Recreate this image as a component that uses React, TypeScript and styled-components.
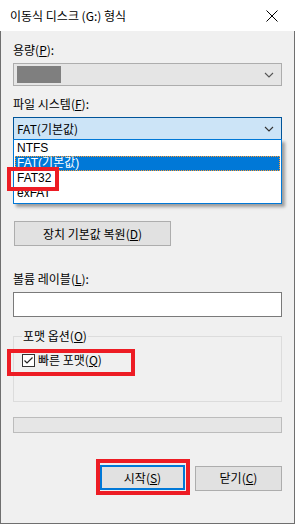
import React from "react";
import styled, { createGlobalStyle } from "styled-components";

const Global = createGlobalStyle`
  html, body { margin: 0; padding: 0; background: #ffffff; }
  body { width: 295px; height: 524px; overflow: hidden; }
  * { box-sizing: border-box; }
`;

const FONT = `"Noto Sans CJK KR", "Noto Sans", sans-serif`;

const Window = styled.div`
  width: 295px;
  height: 524px;
  display: flex;
  flex-direction: column;
  font-family: ${FONT};
  font-size: 12px;
  line-height: 16px;
  color: #000;
`;

const TitleBar = styled.div`
  height: 31px;
  flex: none;
  background: #ffffff;
  display: flex;
  align-items: center;
  justify-content: space-between;
  padding: 0 17px 0 10px;
`;

const Title = styled.span`
  font-size: 12px;
  color: #000;
`;

const CloseIcon = styled.svg`
  width: 12px;
  height: 12px;
  display: block;
`;

const Body = styled.div`
  flex: 1;
  background: #f0f0f0;
  border: 1px solid #6f6f6f;
  border-top: none;
  padding: 11px 12px 0 12px;
  display: flex;
  flex-direction: column;
`;

const Label = styled.div<{ $mt?: number }>`
  margin-top: ${(p) => p.$mt ?? 0}px;
  height: 16px;
  white-space: nowrap;
`;

const U = styled.span`
  text-decoration: underline;
  text-underline-offset: 1px;
`;

const ComboWrap = styled.div<{ $mt?: number }>`
  position: relative;
  margin-top: ${(p) => p.$mt ?? 0}px;
`;

const Combo = styled.div<{ $focused?: boolean }>`
  height: 23px;
  display: flex;
  align-items: center;
  padding: 0 3px 0 3px;
  background: ${(p) => (p.$focused ? "#cce4f7" : "#e5e5e5")};
  border: 1px solid ${(p) => (p.$focused ? "#005499" : "#adadad")};
`;

const ComboValue = styled.div`
  flex: 1;
  white-space: nowrap;
`;

const GrayBlock = styled.div`
  width: 44px;
  height: 17px;
  background: #7f7f7f;
`;

const Chevron = styled.svg`
  width: 10px;
  height: 6px;
  margin-right: 4px;
  display: block;
`;

const List = styled.div`
  position: absolute;
  left: 0;
  right: 0;
  top: 100%;
  margin-top: -1px;
  background: #ffffff;
  border: 1px solid #0078d7;
  box-shadow: 3px 3px 3px rgba(0, 0, 0, 0.35);
  padding: 1px 1px 2px 1px;
  z-index: 2;
`;

const Item = styled.div<{ $selected?: boolean }>`
  height: 15px;
  line-height: 15px;
  padding-left: 2px;
  white-space: nowrap;
  font-family: "Liberation Sans", "Noto Sans CJK KR", sans-serif;
  background: ${(p) => (p.$selected ? "#0078d7" : "transparent")};
  color: ${(p) => (p.$selected ? "#ffffff" : "#000000")};
  outline: ${(p) => (p.$selected ? "1px dotted #ff9a2e" : "none")};
  outline-offset: -1px;
`;

const RedMark = styled.div<{ $l: number; $t: number; $w: number; $h: number }>`
  position: absolute;
  left: ${(p) => p.$l}px;
  top: ${(p) => p.$t}px;
  width: ${(p) => p.$w}px;
  height: ${(p) => p.$h}px;
  border: 4px solid #ed1c24;
  pointer-events: none;
  z-index: 3;
`;

const Button = styled.div<{ $w: number; $default?: boolean }>`
  width: ${(p) => p.$w}px;
  height: 25px;
  display: flex;
  align-items: center;
  justify-content: center;
  background: #e1e1e1;
  border: ${(p) => (p.$default ? "2px solid #0078d7" : "1px solid #adadad")};
  white-space: nowrap;
`;

const ResetRow = styled.div`
  margin-top: 81px;
  padding-left: 1px;
`;

const TextBox = styled.div`
  margin-top: 5px;
  height: 25px;
  background: #ffffff;
  border: 1px solid #7a7a7a;
`;

const Group = styled.fieldset`
  position: relative;
  margin: 11px 0 0 0;
  padding: 8px 0 0 8px;
  height: 74px;
  border: 1px solid #dcdcdc;
  min-width: 0;
`;

const Legend = styled.legend`
  padding: 0 1px;
  margin-left: 0;
  font-size: 12px;
  line-height: 16px;
`;

const CheckRow = styled.div`
  display: flex;
  align-items: center;
  gap: 3px;
  height: 16px;
`;

const CheckBox = styled.div`
  width: 13px;
  height: 13px;
  background: #ffffff;
  border: 1px solid #333333;
  display: flex;
  align-items: center;
  justify-content: center;
`;

const Progress = styled.div`
  margin-top: 15px;
  height: 16px;
  background: #e6e6e6;
  border: 1px solid #bcbcbc;
`;

const ButtonRow = styled.div`
  margin-top: 28px;
  display: flex;
  justify-content: flex-end;
  align-items: center;
  gap: 5px;
`;

const RedFrame = styled.div`
  border: 4px solid #ed1c24;
  padding: 2px 1px 1px 0;
  margin-top: -2px;
`;

export default function App() {
  return (
    <>
      <Global />
      <Window>
        <TitleBar>
          <Title>이동식 디스크 (G:) 형식</Title>
          <CloseIcon viewBox="0 0 12 12">
            <path d="M0.5 0.5 L11.5 11.5 M11.5 0.5 L0.5 11.5" stroke="#000" strokeWidth="1" fill="none" />
          </CloseIcon>
        </TitleBar>
        <Body>
          <Label>
            용량(<U>P</U>):
          </Label>
          <ComboWrap $mt={5}>
            <Combo>
              <ComboValue>
                <GrayBlock />
              </ComboValue>
              <Chevron viewBox="0 0 10 6">
                <path d="M1 1 L5 5 L9 1" stroke="#555" strokeWidth="1.1" fill="none" />
              </Chevron>
            </Combo>
          </ComboWrap>

          <Label $mt={10}>
            파일 시스템(<U>F</U>):
          </Label>
          <ComboWrap $mt={5}>
            <Combo $focused>
              <ComboValue>FAT(기본값)</ComboValue>
              <Chevron viewBox="0 0 10 6">
                <path d="M1 1 L5 5 L9 1" stroke="#333" strokeWidth="1.1" fill="none" />
              </Chevron>
            </Combo>
            <List>
              <Item>NTFS</Item>
              <Item $selected>FAT(기본값)</Item>
              <Item>FAT32</Item>
              <Item>exFAT</Item>
              <RedMark $l={-7} $t={27} $w={52} $h={24} />
            </List>
          </ComboWrap>

          <ResetRow>
            <Button $w={157}>
              장치 기본값 복원(<U>D</U>)
            </Button>
          </ResetRow>

          <Label $mt={25}>
            볼륨 레이블(<U>L</U>):
          </Label>
          <TextBox />

          <Group>
            <Legend>
              포맷 옵션(<U>O</U>)
            </Legend>
            <CheckRow>
              <CheckBox>
                <svg width="11" height="11" viewBox="0 0 11 11">
                  <path d="M1.5 5.5 L4 8 L9.5 2.5" stroke="#222" strokeWidth="1.2" fill="none" />
                </svg>
              </CheckBox>
              <span>
                빠른 포맷(<U>Q</U>)
              </span>
            </CheckRow>
            <RedMark $l={-7} $t={5} $w={128} $h={27} />
          </Group>

          <Progress />

          <ButtonRow>
            <RedFrame>
              <Button $w={85} $default>
                시작(<U>S</U>)
              </Button>
            </RedFrame>
            <Button $w={87}>
              닫기(<U>C</U>)
            </Button>
          </ButtonRow>
        </Body>
      </Window>
    </>
  );
}
